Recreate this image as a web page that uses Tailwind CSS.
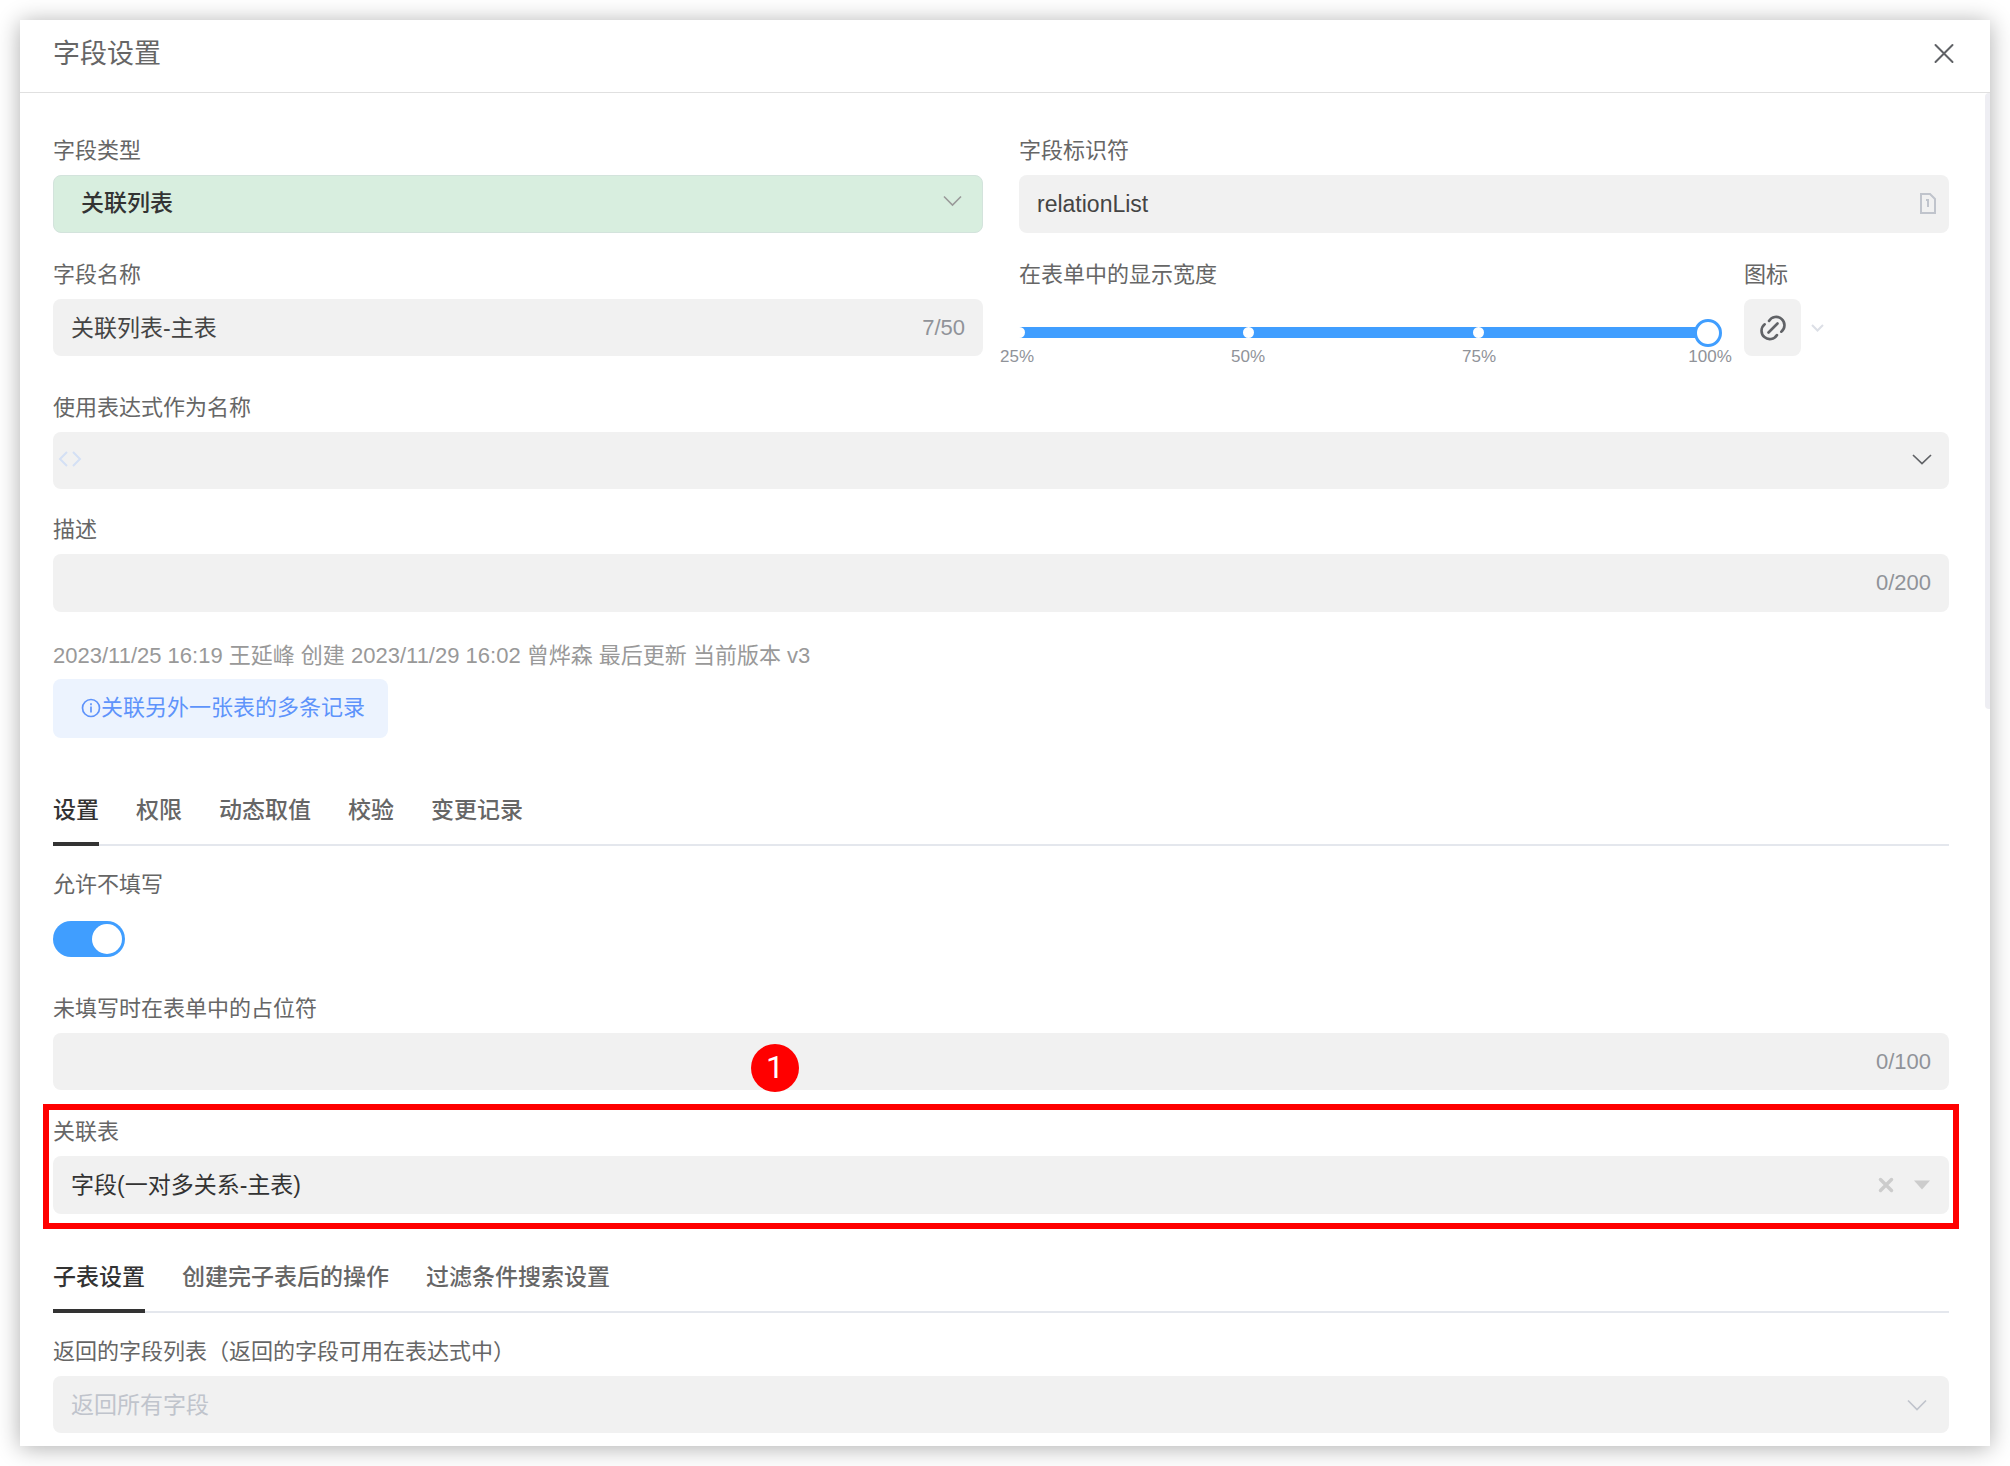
<!DOCTYPE html>
<html lang="zh-CN">
<head>
    <meta charset="UTF-8">
    <meta name="viewport" content="width=device-width, initial-scale=1.0">
    <title>字段设置</title>
    <script src="https://cdn.jsdelivr.net/npm/@tailwindcss/browser@4"></script>
</head>
<body class="bg-white p-5 font-['Liberation_Sans','Noto_Sans_CJK_SC',sans-serif] text-[22px] leading-[30px] text-[#666666]">
    <div class="relative bg-white shadow-[0_2px_22px_rgba(0,0,0,0.32)]">
        <!-- Header -->
        <header class="flex h-[73px] items-center justify-between border-b border-[#e0e0e0] pb-1 pl-[33px] pr-[34px]">
            <h1 class="text-[27px] leading-9">字段设置</h1>
            <button type="button" aria-label="关闭">
                <svg class="size-6" viewBox="0 0 24 24" fill="none" stroke="#606266" stroke-width="2" stroke-linecap="round"><path d="M3.5 3l17 17M20.5 3l-17 17"/></svg>
            </button>
        </header>

        <!-- Scrollbar -->
        <div class="absolute right-0 top-[73px] h-[616px] w-[5px] rounded-l bg-[#eeeef3]"></div>

        <form class="pb-[13px] pl-[33px] pr-[41px] pt-[43px]">
            <div class="grid grid-cols-2 gap-x-9 gap-y-[27px]">
                <div>
                    <label for="fieldType" class="mb-[9px] block">字段类型</label>
                    <div class="relative">
                        <select id="fieldType" class="h-[58px] w-full appearance-none rounded-lg border border-[#d3e3dc] bg-[#d8eedf] pb-[2px] pl-[27px] pr-12 text-[23px] font-medium text-[#333333]">
                            <option>关联列表</option>
                        </select>
                        <svg class="pointer-events-none absolute right-[19px] top-[14px] size-6" viewBox="0 0 24 24" fill="none" stroke="#999999" stroke-width="1.6"><path d="M4 7.5l8.5 8.5 8.5-8.5"/></svg>
                    </div>
                </div>
                <div>
                    <label for="fieldKey" class="mb-[9px] block">字段标识符</label>
                    <div class="flex h-[58px] items-center rounded-lg bg-[#f1f1f1] pl-[18px] pr-2">
                        <input id="fieldKey" type="text" value="relationList" class="min-w-0 flex-1 text-[23px] text-[#444444] outline-none">
                        <svg class="size-6" viewBox="0 0 24 24" fill="none" stroke="#c0c4cc" stroke-width="2"><path d="M4 2h9l5 5v14H4z"/><path d="M9 8h2v7"/></svg>
                    </div>
                </div>
                <div>
                    <label for="fieldName" class="mb-[9px] block">字段名称</label>
                    <div class="flex h-[57px] items-center rounded-lg bg-[#f1f1f1] px-[18px]">
                        <input id="fieldName" type="text" maxlength="50" value="关联列表-主表" class="min-w-0 flex-1 text-[23px] text-[#444444] outline-none">
                        <span class="text-[#909399]">7/50</span>
                    </div>
                </div>
                <div class="flex gap-9">
                    <div class="flex-1">
                        <label for="fieldWidth" class="block">在表单中的显示宽度</label>
                        <div class="relative mt-[37px] flex h-[11px] items-center justify-between bg-[#409eff]">
                            <span class="flex w-0 justify-center"><i class="size-[11px] shrink-0 rounded-full bg-white"></i></span>
                            <span class="flex w-0 justify-center"><i class="size-[11px] shrink-0 rounded-full bg-white"></i></span>
                            <span class="flex w-0 justify-center"><i class="size-[11px] shrink-0 rounded-full bg-white"></i></span>
                            <span class="w-0"></span>
                            <input id="fieldWidth" type="range" min="25" max="100" step="25" value="100" class="absolute -inset-x-[14px] h-7 appearance-none bg-transparent [&::-webkit-slider-thumb]:size-7 [&::-webkit-slider-thumb]:appearance-none [&::-webkit-slider-thumb]:rounded-full [&::-webkit-slider-thumb]:border-3 [&::-webkit-slider-thumb]:border-solid [&::-webkit-slider-thumb]:border-[#409eff] [&::-webkit-slider-thumb]:bg-white">
                        </div>
                        <div class="-mx-[2px] mt-2 flex justify-between text-[17px] leading-[22px] text-[#909399]">
                            <span class="flex w-0 justify-center">25%</span>
                            <span class="flex w-0 justify-center">50%</span>
                            <span class="flex w-0 justify-center">75%</span>
                            <span class="flex w-0 justify-center">100%</span>
                        </div>
                    </div>
                    <div class="w-[205px]">
                        <span class="mb-[9px] block">图标</span>
                        <button type="button" aria-label="图标" class="flex items-center gap-[6px]">
                            <span class="flex size-[57px] items-center justify-center rounded-lg bg-[#f1f1f1]">
                                <svg class="size-8" viewBox="0 0 32 32" fill="none" stroke="#606266" stroke-width="2.6" stroke-linecap="round"><path d="M12 9a8.3 8.3 0 1 1 12.3 10.7M20 23a8.3 8.3 0 1 1-12.3-10.7M11.5 20.5l9-9"/></svg>
                            </span>
                            <svg class="size-5" viewBox="0 0 20 20" fill="none" stroke="#dcdfe6" stroke-width="2"><path d="M5 7l5.5 5.5L16 7"/></svg>
                        </button>
                    </div>
                </div>
            </div>

            <label for="expression" class="mb-[9px] mt-[25px] block">使用表达式作为名称</label>
            <div class="flex h-[57px] items-center rounded-lg bg-[#f1f1f1] pb-1 pl-[5px] pr-[15px]">
                <svg class="size-6" viewBox="0 0 24 24" fill="none" stroke="#d4e0f5" stroke-width="2"><path d="M9 5l-7 7 7 7M15 5l7 7-7 7"/></svg>
                <input id="expression" type="text" class="min-w-0 flex-1 text-[23px] outline-none">
                <svg class="size-6" viewBox="0 0 24 24" fill="none" stroke="#606266" stroke-width="1.7"><path d="M3 8l9 8.5L21 8"/></svg>
            </div>

            <label for="description" class="mb-[9px] mt-[26px] block">描述</label>
            <div class="flex h-[58px] items-center rounded-lg bg-[#f1f1f1] px-[18px]">
                <input id="description" type="text" maxlength="200" class="min-w-0 flex-1 text-[23px] outline-none">
                <span class="text-[#909399]">0/200</span>
            </div>

            <p class="mt-[29px] text-[#999999]">2023/11/25 16:19 王延峰 创建 2023/11/29 16:02 曾烨森 最后更新 当前版本 v3</p>
            <div class="mt-2 flex h-[59px] w-fit items-center rounded-lg bg-[#ecf3fe] pb-[2px] pl-7 pr-[23px] text-[#5e93fb]">
                <svg class="size-5" viewBox="0 0 20 20" fill="none" stroke="currentColor" stroke-width="1.7"><circle cx="10" cy="10" r="8.5"/><path d="M10 8.5v6M10 5.3v1.9"/></svg>
                <span>关联另外一张表的多条记录</span>
            </div>

            <!-- Main tabs -->
            <div role="tablist" class="mt-9 flex h-[72px] gap-[37px] border-b-2 border-[#e4e7ed] text-[23px] font-medium">
                <button type="button" role="tab" aria-selected="true" class="-mb-[2px] border-b-4 border-[#333333] pt-1 text-[#333333]">设置</button>
                <button type="button" role="tab" class="pt-[2px]">权限</button>
                <button type="button" role="tab" class="pt-[2px]">动态取值</button>
                <button type="button" role="tab" class="pt-[2px]">校验</button>
                <button type="button" role="tab" class="pt-[2px]">变更记录</button>
            </div>

            <label for="allowEmpty" class="mt-6 block">允许不填写</label>
            <input id="allowEmpty" type="checkbox" role="switch" checked class="mt-[21px] flex h-9 w-[72px] appearance-none items-center rounded-full bg-[#dcdfe6] px-[3px] before:size-[30px] before:rounded-full before:bg-white checked:justify-end checked:bg-[#409eff]">

            <label for="placeholderText" class="mb-[9px] mt-[37px] block">未填写时在表单中的占位符</label>
            <div class="flex h-[57px] items-center rounded-lg bg-[#f1f1f1] px-[18px]">
                <input id="placeholderText" type="text" maxlength="100" class="min-w-0 flex-1 text-[23px] outline-none">
                <span class="text-[#909399]">0/100</span>
            </div>

            <!-- Highlighted step -->
            <div class="relative -mx-[10px] mt-[14px] border-6 border-[#ff0000] px-1 pb-[9px] pt-[7px]">
                <span class="absolute -top-[66px] left-[702px] flex size-12 items-center justify-center rounded-full bg-[#ff0000] pb-[2px] font-[Roboto] text-[32px] text-white">1</span>
                <label for="relationTable" class="mb-[9px] block">关联表</label>
                <div class="flex h-[58px] items-center rounded-lg bg-[#f1f1f1] pl-[18px] pr-[15px]">
                    <input id="relationTable" type="text" value="字段(一对多关系-主表)" class="min-w-0 flex-1 text-[23px] text-[#333333] outline-none">
                    <button type="button" aria-label="清除" class="mr-3">
                        <svg class="size-6" viewBox="0 0 24 24" fill="none" stroke="#cccccc" stroke-width="3.5" stroke-linecap="round"><path d="M6.5 6.5l11 11M17.5 6.5l-11 11"/></svg>
                    </button>
                    <svg class="size-6" viewBox="0 0 24 24" fill="#cccccc"><path d="M4 7.500h16l-8 9z"/></svg>
                </div>
            </div>

            <!-- Sub table tabs -->
            <div role="tablist" class="mt-3 flex h-[72px] gap-[37px] border-b-2 border-[#e4e7ed] text-[23px] font-medium">
                <button type="button" role="tab" aria-selected="true" class="-mb-[2px] border-b-4 border-[#333333] pt-1 text-[#333333]">子表设置</button>
                <button type="button" role="tab" class="pt-[2px]">创建完子表后的操作</button>
                <button type="button" role="tab" class="pt-[2px]">过滤条件搜索设置</button>
            </div>

            <label for="returnFields" class="mb-[9px] mt-6 block">返回的字段列表（返回的字段可用在表达式中）</label>
            <div class="flex h-[57px] items-center rounded-lg bg-[#f1f1f1] pl-[18px] pr-5">
                <input id="returnFields" type="text" placeholder="返回所有字段" class="min-w-0 flex-1 text-[23px] outline-none placeholder:text-[#c0c4cc]">
                <svg class="size-6" viewBox="0 0 24 24" fill="none" stroke="#c0c4cc" stroke-width="1.7"><path d="M3 7.5l9 9 9-9"/></svg>
            </div>
        </form>
    </div>
</body>
</html>
